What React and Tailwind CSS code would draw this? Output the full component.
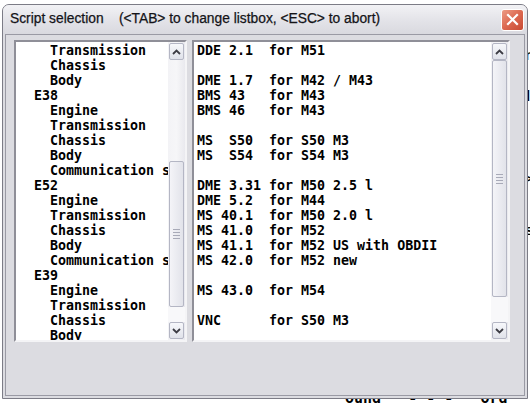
import React from "react";

const leftRows = [
  "    Transmission",
  "    Chassis",
  "    Body",
  "  E38",
  "    Engine",
  "    Transmission",
  "    Chassis",
  "    Body",
  "    Communication system",
  "  E52",
  "    Engine",
  "    Transmission",
  "    Chassis",
  "    Body",
  "    Communication system",
  "  E39",
  "    Engine",
  "    Transmission",
  "    Chassis",
  "    Body",
];

const rightRows = [
  "DDE 2.1  for M51",
  "",
  "DME 1.7  for M42 / M43",
  "BMS 43   for M43",
  "BMS 46   for M43",
  "",
  "MS  S50  for S50 M3",
  "MS  S54  for S54 M3",
  "",
  "DME 3.31 for M50 2.5 l",
  "DME 5.2  for M44",
  "MS 40.1  for M50 2.0 l",
  "MS 41.0  for M52",
  "MS 41.1  for M52 US with OBDII",
  "MS 42.0  for M52 new",
  "",
  "MS 43.0  for M54",
  "",
  "VNC      for S50 M3",
  "",
];

function Chevron({ up }) {
  return (
    <svg width="9" height="6" viewBox="0 0 9 6">
      <polyline
        points={up ? "1,5 4.5,1.5 8,5" : "1,1 4.5,4.5 8,1"}
        fill="none"
        stroke="#3c3c44"
        strokeWidth="1.8"
      />
    </svg>
  );
}

function ScrollButton({ up }) {
  return (
    <div className="mx-[1px] h-[17px] w-[15px] shrink-0 rounded-[2px] border border-[#b4b6c4] bg-gradient-to-b from-[#f7f8fb] to-[#e0e2ea] flex items-center justify-center">
      <Chevron up={up} />
    </div>
  );
}

function Scrollbar({ before, thumb }) {
  return (
    <div className="flex h-full w-[17px] shrink-0 flex-col bg-gradient-to-r from-[#f3f3f6] via-[#f6f6f8] to-[#e9e9ee] pt-[1px] pb-[1px]">
      <ScrollButton up />
      <div className="flex flex-1 flex-col">
        <div style={{ height: before }} className="shrink-0" />
        <div
          style={{ height: thumb }}
          className="mx-[1px] w-[15px] shrink-0 rounded-[2px] border border-[#b4b6c4] bg-gradient-to-r from-[#f4f4f8] to-[#e2e3ea] flex flex-col items-center justify-center gap-[2px]"
        >
          <div className="h-[1px] w-[7px] bg-[#a8aab8]" />
          <div className="h-[1px] w-[7px] bg-[#a8aab8]" />
          <div className="h-[1px] w-[7px] bg-[#a8aab8]" />
          <div className="h-[1px] w-[7px] bg-[#a8aab8]" />
        </div>
        <div className="flex-1 bg-[#f8f8fa]" />
      </div>
      <ScrollButton />
    </div>
  );
}

function ListBox({ rows, width, pl, before, thumb }) {
  return (
    <div
      className="flex h-[302px] shrink-0 border-2 border-t-[#8f8f98] border-l-[#8f8f98] border-r-[#f4f4f6] border-b-[#f4f4f6] bg-white"
      style={{ width }}
    >
      <div
        className="flex-1 overflow-hidden pt-[1px] text-[13.3px] font-bold leading-[15px] text-black"
        style={{ paddingLeft: pl, fontFamily: '"DejaVu Sans Mono", "Liberation Mono", monospace' }}
      >
        {rows.map((r, i) => (
          <div key={i} className="h-[15px] whitespace-pre">
            {r}
          </div>
        ))}
      </div>
      <Scrollbar before={before} thumb={thumb} />
    </div>
  );
}

export default function App() {
  return (
    <div
      className="relative h-[409px] w-[530px] overflow-hidden bg-white"
      style={{ fontFamily: '"Liberation Sans", Arial, sans-serif' }}
    >
      {/* desktop text behind the window */}
      <div className="absolute left-[525px] top-[47px] text-[15px] font-bold leading-none text-black">n</div>
      <div className="absolute left-[526px] top-[88px] text-[15px] font-bold leading-none text-black">l</div>
      <div className="absolute left-[525px] top-[172px] text-[13px] font-bold leading-none text-black">&gt;</div>
      <div className="absolute left-[525px] top-[222px] text-[15px] font-bold leading-none text-black">s</div>
      <div
        className="absolute left-[345px] top-[391px] whitespace-pre text-[15px] font-bold leading-none text-black"
        style={{ fontFamily: '"DejaVu Sans Mono", monospace' }}
      >
        {"ound   - - -   ord"}
      </div>

      <div className="relative ml-[2px] mt-[4px] flex h-[395px] w-[526px] flex-col rounded-t-[7px] border border-[#7c7c86] bg-[#dcdce1]">
        {/* title bar */}
        <div className="flex h-[29px] shrink-0 items-center justify-between rounded-t-[6px] bg-gradient-to-b from-[#f2f2f5] via-[#e4e4e9] to-[#d9d9df] pl-[7px] pr-[3px]">
          <div
            className="whitespace-pre text-[13.8px] text-[#141418]"
            style={{ WebkitTextStroke: "0.25px #141418" }}
          >
            {"Script selection    (<TAB> to change listbox, <ESC> to abort)"}
          </div>
          <div className="flex h-[22px] w-[23px] items-center justify-center rounded-[3px] border border-white bg-gradient-to-br from-[#ec9c86] via-[#dc6850] to-[#c84a34]">
            <svg width="13" height="13" viewBox="0 0 13 13">
              <path d="M2 2 L11 11 M11 2 L2 11" stroke="white" strokeWidth="2.2" strokeLinecap="square" />
            </svg>
          </div>
        </div>
        {/* frame */}
        <div className="flex flex-1 flex-col px-[2px] pb-[2px]">
          <div className="flex flex-1 flex-col border border-[#9a9aa4] bg-[#dcdce1] pl-[8px] pt-[5px]">
            <div className="flex gap-[5px]">
              <ListBox rows={leftRows} width={173} pl={2} before={101} thumb={146} />
              <ListBox rows={rightRows} width={318} pl={3} before={0} thumb={237} />
            </div>
          </div>
        </div>
      </div>
    </div>
  );
}
